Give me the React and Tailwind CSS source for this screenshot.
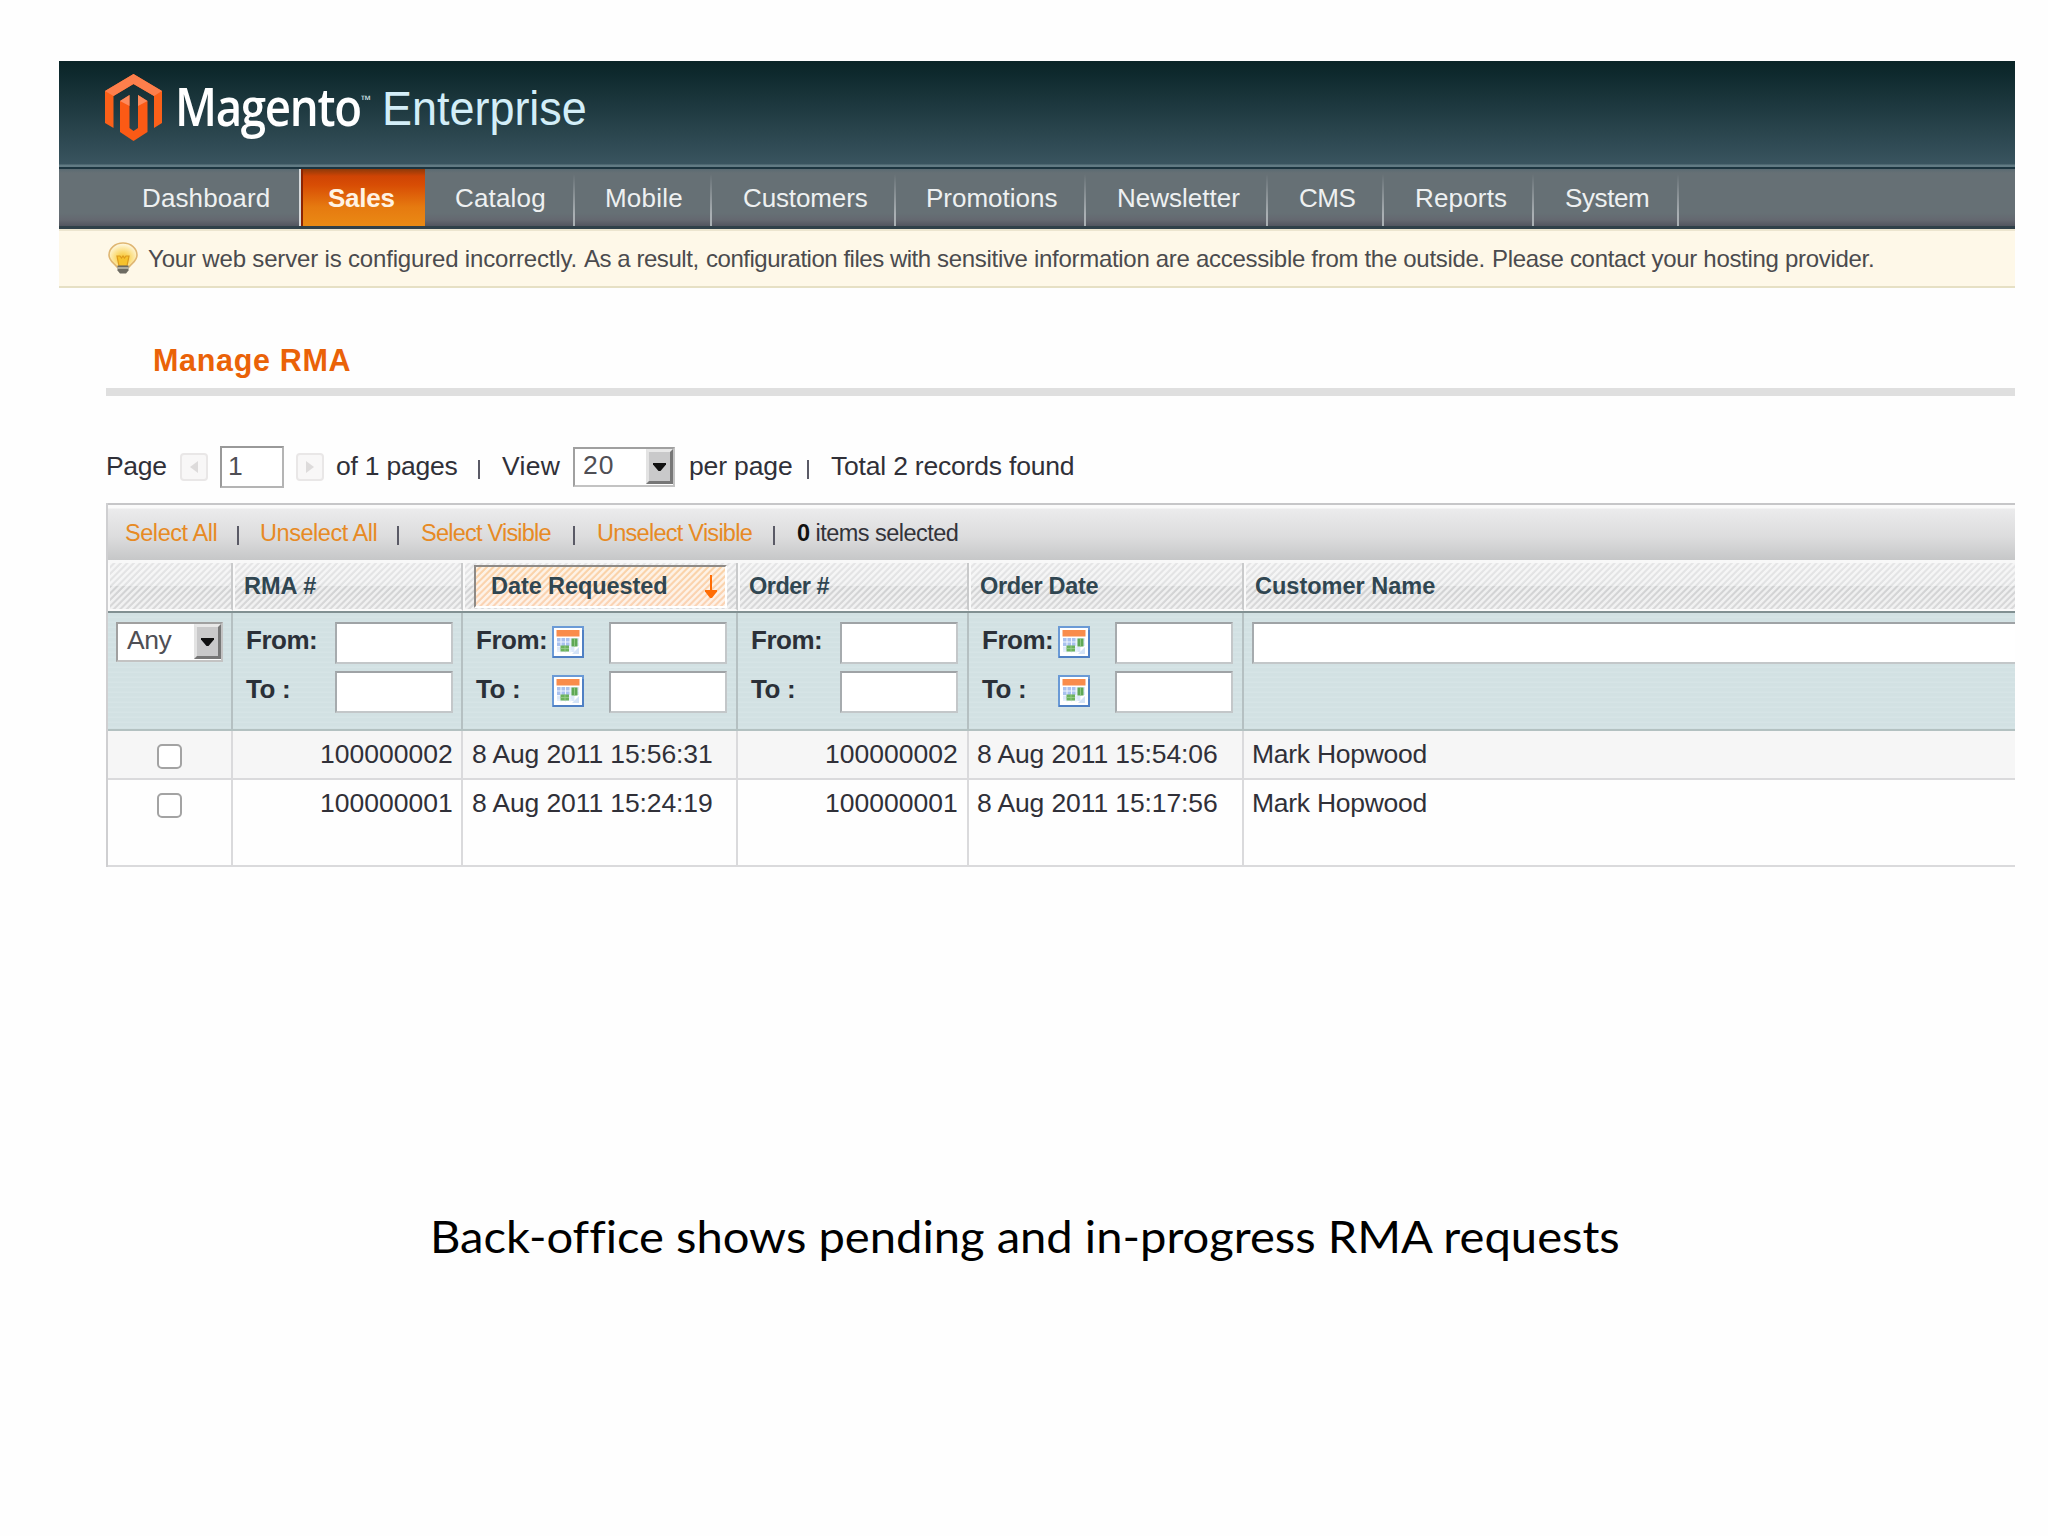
import React, { useLayoutEffect, useRef, useState } from "react";

/* Text tuned to an exact width, by tracking or by horizontal stretch. */
function Fit({ w, stretch = false, className = "", children }) {
  const ref = useRef(null);
  const [style, setStyle] = useState({});
  useLayoutEffect(() => {
    const natural = ref.current.offsetWidth;
    const n = ref.current.textContent.length;
    if (stretch) setStyle({ transform: `scaleX(${w / natural})`, transformOrigin: "0 50%" });
    else setStyle({ letterSpacing: `${(w - natural) / Math.max(1, n - 1)}px` });
  }, [w, stretch]);
  return (
    <span className={"block shrink-0 whitespace-nowrap " + className} style={{ width: w }}>
      <span ref={ref} className="inline-block" style={style}>
        {children}
      </span>
    </span>
  );
}

function Logo() {
  return (
    <svg className="ml-[46px] h-[67px] w-[57px] shrink-0" viewBox="0 0 57 67">
      <path d="M28.500 0L57 17V49L49 54V22L28.500 10L8.500 22V54L0 49V17Z" fill="#fb6019" />
      <path d="M28.500 0L57 17L49 22L28.500 10L8.500 22L0 17Z" fill="#fd7f4c" />
      <path d="M15 27L24.500 21V54L28.500 57L33 54V21L42.500 27V58L28.500 67L15 58Z" fill="#fb5a15" />
      <path d="M15 27L24.500 21V32ZM42.500 27L33 21V32Z" fill="#fd8a5c" />
    </svg>
  );
}

function Bulb() {
  return (
    <svg className="-mt-[2px] ml-[49px] h-8 w-[30px] shrink-0" viewBox="0 0 30 32">
      <defs>
        <radialGradient id="bulb" cx="0.5" cy="0.62" r="0.6">
          <stop offset="0" stopColor="#f8c42c" />
          <stop offset="0.45" stopColor="#fbdc78" />
          <stop offset="1" stopColor="#fff9e4" />
        </radialGradient>
      </defs>
      <path d="M15 1C7 1 1 6.500 1 13C1 19 5.500 20.500 9 25H21C24.500 20.500 29 19 29 13C29 6.500 23 1 15 1Z" fill="url(#bulb)" stroke="#dfb672" strokeWidth="1.600" />
      <path d="M9 14H12L13.500 16L15 14L16.500 16L18 14H21L19 24H11Z" fill="#f6c22d" stroke="#dc9a1c" strokeWidth="1.200" />
      <path d="M9.500 23.500H20.500V28.500L18 31.500H12L9.500 28.500Z" fill="#6d6b62" />
      <path d="M9.500 26H20.500" stroke="#c4c2b4" strokeWidth="1.500" />
    </svg>
  );
}

function Calendar({ className = "" }) {
  return (
    <svg className={"h-8 w-8 shrink-0 " + className} viewBox="0 0 32 32">
      <rect x="1" y="1" width="30" height="30" fill="#fff" stroke="#6a9ad6" strokeWidth="2" />
      <path d="M1 31H31V4" fill="none" stroke="#4f80c4" strokeWidth="2" />
      <rect x="4.500" y="4" width="23" height="6.500" fill="#f98c4b" />
      <path d="M5 12H27V20H22V26H5Z" fill="#dce8f9" />
      <path d="M5 12H18V20H5Z" fill="#a9c1ee" />
      <path d="M5 16H27M5 20.500H24M5 25H20M9 12V27M13.500 12V27M18 12V27M22.500 12V27" stroke="#eef5fd" strokeWidth="1" />
      <rect x="19.500" y="12.500" width="6" height="8" fill="#5fa855" />
      <rect x="8.500" y="19.500" width="8.500" height="6" fill="#6cb25c" />
      <path d="M13 19.500V25.500M8.500 22.500H17M22.500 12.500V20.500" stroke="#9bcf8e" strokeWidth="0.800" />
      <path d="M20 28L27 21V28Z" fill="#d3e3f7" />
    </svg>
  );
}

const nav = [
  ["Dashboard", 128, "w-[242px] pl-[83px]"],
  ["Sales", 67, "w-[124px] pl-[25px]"],
  ["Catalog", 91, "w-[150px] pl-[30px]"],
  ["Mobile", 78, "w-[137px] pl-[30px]"],
  ["Customers", 125, "w-[184px] pl-[31px]"],
  ["Promotions", 132, "w-[190px] pl-[30px]"],
  ["Newsletter", 123, "w-[182px] pl-[31px]"],
  ["CMS", 57, "w-[116px] pl-[31px]"],
  ["Reports", 92, "w-[150px] pl-[31px]"],
  ["System", 85, "w-[145px] pl-[31px]"],
];

const hatch =
  "bg-[repeating-linear-gradient(135deg,rgba(255,255,255,0.65)_0px,rgba(255,255,255,0.65)_1.500px,rgba(255,255,255,0)_2.600px,rgba(255,255,255,0)_3.700px,rgba(255,255,255,0.65)_4.600px),linear-gradient(180deg,#e5e5e6_0,#e1e2e3_23px,#d0d1d2_23px,#d9d9da_100%)]";
const hatchOrange =
  "bg-[repeating-linear-gradient(135deg,rgba(255,255,255,0.7)_0px,rgba(255,255,255,0.7)_1.500px,rgba(255,255,255,0)_2.600px,rgba(255,255,255,0)_3.700px,rgba(255,255,255,0.7)_4.600px),linear-gradient(180deg,#fad3a8,#fbd3b4)]";

const cols = ["w-[125px]", "w-[230px]", "w-[275px]", "w-[231px]", "w-[275px]", "w-[771px]"];

function Bar({ className }) {
  return <span className={"h-[19px] w-[2px] shrink-0 bg-[#5a5a66] " + className} />;
}

function Box({ className = "" }) {
  return <div className={"h-[42px] shrink-0 border-2 border-[#c3c7c9] border-t-[#9fa3a6] border-l-[#a6abae] bg-white " + className} />;
}

function Drop({ className = "", children }) {
  return (
    <div className={"flex h-10 shrink-0 items-start border-2 border-[#c3c3c3] border-t-[#a0a0a0] border-l-[#a0a0a0] bg-white text-[26.500px] leading-[33px] text-[#4f4f55] " + className}>
      {children}
      <div className="ml-auto flex h-[35px] w-[27px] items-center justify-center self-start border-[3px] border-t-[#e8e8e8] border-r-[#777] border-b-[#777] border-l-[#e3e3e3] bg-[#c9c9ca]">
        <svg className="h-[8px] w-[13px]" viewBox="0 0 13 8">
          <path d="M0 0H13V1.500L7.500 8H5.500L0 1.500Z" fill="#111" />
        </svg>
      </div>
    </div>
  );
}

function Range({ calendar, inputs }) {
  return (
    <div className="pt-[9px]">
      {[["From:", 72], ["To :", 45]].map(([label, w]) => (
        <div key={label} className="flex h-[49px] items-start">
          <div className="w-[76px] shrink-0 text-[26px] leading-[37px] font-bold text-[#2b3038]">
            <Fit w={w}>{label}</Fit>
          </div>
          {calendar && <Calendar className="mt-[4px]" />}
          <Box className={inputs} />
        </div>
      ))}
    </div>
  );
}

function Step({ dir, className }) {
  return (
    <div className={"flex h-7 w-[28px] shrink-0 items-center justify-center rounded-[4px] border-2 border-[#e9e7e7] bg-[#f8f7f7] " + className}>
      <svg className="h-3 w-2" viewBox="0 0 8 12">
        <path d={dir === "l" ? "M8 0V12L0 6Z" : "M0 0V12L8 6Z"} fill="#dddbdb" />
      </svg>
    </div>
  );
}

const records = [
  ["100000002", "8 Aug 2011 15:56:31", "8 Aug 2011 15:54:06"],
  ["100000001", "8 Aug 2011 15:24:19", "8 Aug 2011 15:17:56"],
];

export default function App() {
  return (
    <div className="h-[1536px] w-[2048px] overflow-hidden bg-[#fefefe] pt-[61px] pl-[59px] font-['Liberation_Sans',Arial,sans-serif] text-[#303038]">
      <div className="w-[1956px]">
        <header className="flex h-[108px] items-start border-b-[2px] border-[#1c3540] bg-[linear-gradient(180deg,#0a2427_0,#0e292d_12px,#39545f_103px,#627b84_104px,#627b84_106px)] pt-[13px]">
          <Logo />
          <Fit w={186} stretch className="ml-[13px] font-['Open_Sans',sans-serif] text-[52px] leading-[63px] font-semibold tracking-[-1.500px] text-white">
            Magento
          </Fit>
          <Fit w={10} stretch className="mt-[19px] font-['Open_Sans',sans-serif] text-[12px] leading-[14px] font-semibold text-[#d6e8ee]">
            ™
          </Fit>
          <Fit w={205} stretch className="ml-[11px] text-[48px] leading-[69px] text-[#d3eef8]">
            Enterprise
          </Fit>
        </header>

        <nav className="flex h-[60px] border-b-[3px] border-[#2f4049] bg-[linear-gradient(180deg,#5a6a72_0,#667075_4px,#667075_44px,#646870_51px,#52555f_57px)]">
          {nav.map(([label, w, cls], i) => (
            <div
              key={label}
              className={
                "flex shrink-0 items-center pt-px text-[26px] leading-[56px] " +
                cls +
                (i === 1
                  ? " border-l-2 border-[#8c2403] bg-[linear-gradient(180deg,#8d3a0a_0,#cf4404_7px,#d84d05_16px,#e67a10_38px,#ea8a14_100%)] font-bold text-[#fff3e4]"
                  : i === 0
                    ? " border-r-2 border-[#d5d8da] text-[#eef0f1]"
                    : " bg-[linear-gradient(180deg,rgba(180,186,189,0)_5px,#a9afb3_45px)] bg-[length:2px_100%] bg-right bg-no-repeat text-[#eef0f1]")
              }
            >
              <Fit w={w}>{label}</Fit>
            </div>
          ))}
        </nav>

        <div className="flex h-[59px] items-center border-t-2 border-b-2 border-t-[#ece5cf] border-b-[#e6e0c4] bg-[#fef8e8] text-[24px] leading-[54px] text-[#4b4b4e]">
          <Bulb />
          <Fit w={429} className="ml-[10px]">Your web server is configured incorrectly.</Fit>
          <Fit w={115} className="ml-[7px]">As a result,</Fit>
          <Fit w={225} className="ml-[7px]">configuration files with</Fit>
          <Fit w={548} className="ml-[6px]">sensitive information are accessible from the outside.</Fit>
          <Fit w={383} className="ml-[7px]">Please contact your hosting provider.</Fit>
        </div>

        <main className="ml-[47px]">
          <div className="h-[108px] border-b-[8px] border-[#dfdfdf] pt-[52px] pl-[47px] text-[30.500px] leading-[40px] font-bold text-[#ea6208]">
            <Fit w={198}>Manage RMA</Fit>
          </div>

          <div className="mt-[49px] flex h-[43px] items-center text-[26.500px] leading-[41px]">
            <Fit w={61}>Page</Fit>
            <Step dir="l" className="mt-px ml-[13px]" />
            <div className="ml-[12px] h-[42px] w-[64px] shrink-0 border-2 border-[#b4b4b4] border-t-[#999] border-l-[#999] bg-white pl-[6px] leading-[36px] text-[#4f4f55]">1</div>
            <Step dir="r" className="mt-px ml-[12px]" />
            <Fit w={122} className="ml-[12px]">of 1 pages</Fit>
            <Bar className="mt-[5px] ml-[20px]" />
            <Fit w={58} className="ml-[22px]">View</Fit>
            <Drop className="mt-px ml-[13px] w-[102px] pl-[8px]">
              <Fit w={30}>20</Fit>
            </Drop>
            <Fit w={104} className="ml-[14px]">per page</Fit>
            <Bar className="mt-[5px] ml-[14px]" />
            <Fit w={243} className="ml-[22px]">Total 2 records found</Fit>
          </div>

          <div className="mt-[15px] border-l-2 border-[#cfcfd1]">
            <div className="flex h-[57px] items-center border-t-2 border-[#c6c6c8] bg-[linear-gradient(180deg,#fafafa_0,#fafafa_3px,#ebebec_4px,#dcdcdd_32px,#c6c7c8_100%)] pt-px pl-[17px] text-[23.500px] leading-[51px] text-[#e78a24]">
              <Fit w={93}>Select All</Fit>
              <Bar className="mt-[5px] ml-[19px]" />
              <Fit w={118} className="ml-[21px]">Unselect All</Fit>
              <Bar className="mt-[5px] ml-[19px]" />
              <Fit w={131} className="ml-[22px]">Select Visible</Fit>
              <Bar className="mt-[5px] ml-[21px]" />
              <Fit w={156} className="ml-[22px]">Unselect Visible</Fit>
              <Bar className="mt-[5px] ml-[20px]" />
              <Fit w={162} className="ml-[22px] text-[#333339]">
                <b className="text-[#111]">0</b> items selected
              </Fit>
            </div>

            <div className="flex h-[53px] border-t-[3px] border-b-2 border-t-[#f8f8f8] border-b-[#819092] text-[23.500px] leading-[47px] font-bold text-[#304651]">
              {[null, ["RMA #", 72], ["Date Requested", 177], ["Order #", 81], ["Order Date", 118], ["Customer Name", 180]].map((h, i) => (
                <div key={i} className={"shrink-0 border-b-2 border-l-2 border-[#fafafa] " + cols[i] + " " + hatch + (i < 5 ? " border-r-2 border-r-[#c9cacb]" : "")}>
                  {i === 2 ? (
                    <div className={"mt-[2px] ml-[9px] flex h-[43px] w-[253px] items-center border-2 border-t-[#8e8a86] border-r-white border-b-white border-l-[#8e8a86] pl-[15px] " + hatchOrange}>
                      <Fit w={177} className="-mt-px">Date Requested</Fit>
                      <svg className="-mt-px ml-[37px] h-[23px] w-[12px]" viewBox="0 0 12 23">
                        <path d="M6 0V18" stroke="#ff6d05" strokeWidth="2" />
                        <path d="M0 15H12V16.500L7 23H5L0 16.500Z" fill="#ff6d05" />
                      </svg>
                    </div>
                  ) : (
                    h && <Fit w={h[1]} className="ml-[9px]">{h[0]}</Fit>
                  )}
                </div>
              ))}
            </div>

            <div className="flex h-[118px] border-b-2 border-[#b3c1c1] bg-[repeating-linear-gradient(180deg,#d2e1e3_0,#d2e1e3_3px,#d6e4e6_4px,#d6e4e6_5px)]">
              {cols.map((c, i) => (
                <div key={i} className={"shrink-0 " + c + (i < 5 ? " border-r-2 border-[#b5c0c2]" : "") + (i > 0 && i < 5 ? " pl-[13px]" : "")}>
                  {i === 0 && (
                    <Drop className="mt-[9px] ml-[8px] w-[107px] pl-[9px]">
                      <Fit w={45}>Any</Fit>
                    </Drop>
                  )}
                  {(i === 1 || i === 3) && <Range inputs="ml-[13px] w-[118px]" />}
                  {(i === 2 || i === 4) && <Range calendar inputs="ml-[25px] w-[118px]" />}
                  {i === 5 && <div className="mt-[9px] ml-[8px] h-[42px] border-2 border-r-0 border-[#c3c7c9] border-t-[#9fa3a6] border-l-[#a6abae] bg-white" />}
                </div>
              ))}
            </div>

            {records.map(([id, requested, ordered], r) => (
              <div key={id} className={"flex border-b-2 border-[#dadadc] text-[26.500px] leading-[47px] " + (r === 0 ? "h-[49px] bg-[#f6f6f6]" : "h-[87px] bg-[#fefefe]")}>
                {cols.map((c, i) => (
                  <div key={i} className={"shrink-0 border-[#dadadc] " + c + (i < 5 ? " border-r-2" : "")}>
                    {i === 0 && <div className="mt-[13px] ml-[49px] h-[25px] w-[25px] rounded-[5px] border-2 border-[#a3a3a3] bg-white" />}
                    {i === 1 && <Fit w={133} className="ml-[87px]">{id}</Fit>}
                    {i === 2 && <Fit w={241} className="ml-[9px]">{requested}</Fit>}
                    {i === 3 && <Fit w={133} className="ml-[87px]">{id}</Fit>}
                    {i === 4 && <Fit w={241} className="ml-[8px]">{ordered}</Fit>}
                    {i === 5 && <Fit w={175} className="ml-[8px]">Mark Hopwood</Fit>}
                  </div>
                ))}
              </div>
            ))}
          </div>
        </main>

        <div className="mt-[339px] ml-[371px] font-['Lato',sans-serif] text-[45px] leading-[60px] text-black">
          <Fit w={1190} stretch className="[font-variant-ligatures:none]">Back-office shows pending and in-progress RMA requests</Fit>
        </div>
      </div>
    </div>
  );
}
